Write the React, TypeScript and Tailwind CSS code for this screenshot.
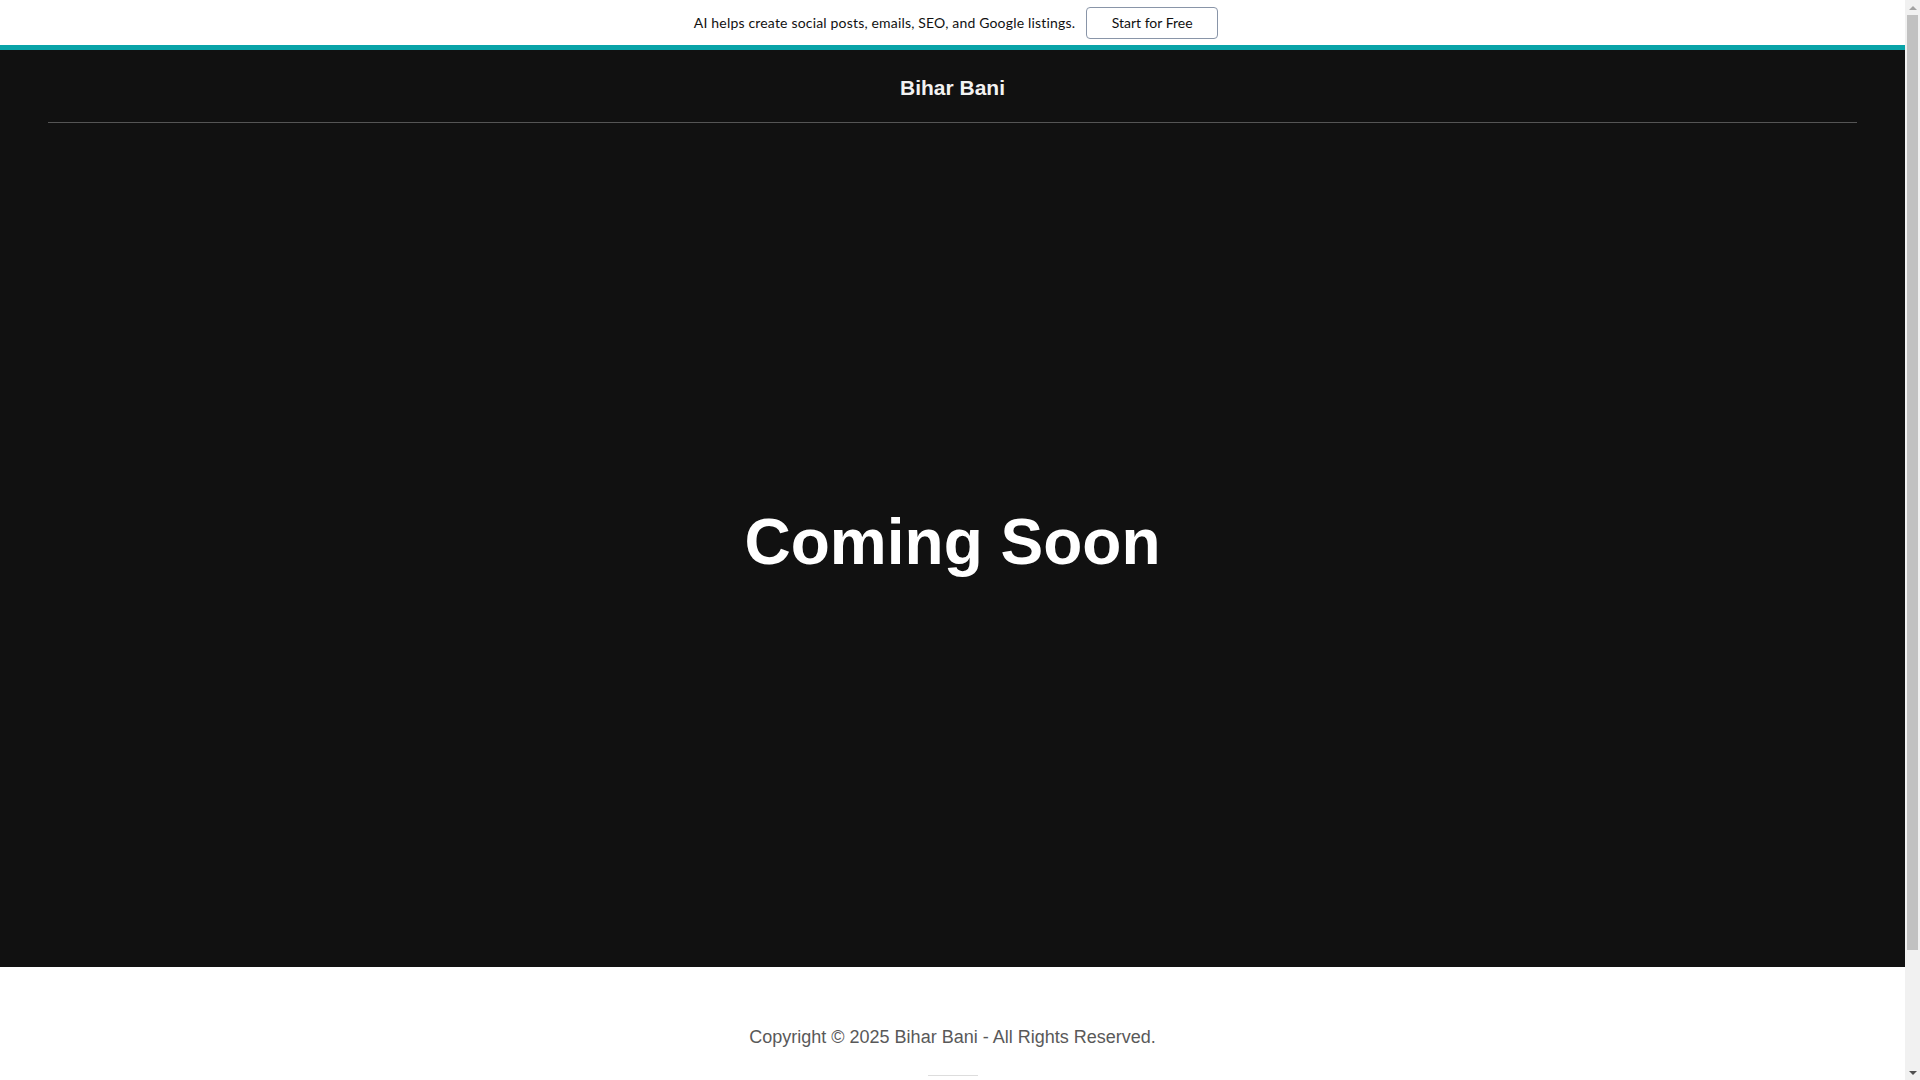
import React from "react";

function FakeScrollbar() {
  return (
    <div className="w-[15px] h-screen shrink-0 bg-[#f1f1f1] flex flex-col">
      <div className="h-[15px] flex items-center justify-center">
        <div className="w-0 h-0 border-l-[4px] border-r-[4px] border-b-[4px] border-l-transparent border-r-transparent border-b-[#a3a3a3]" />
      </div>
      <div className="mx-[2px] h-[935px] bg-[#c1c1c1]" />
      <div className="flex-1" />
      <div className="h-[15px] flex items-center justify-center">
        <div className="w-0 h-0 border-l-[4px] border-r-[4px] border-t-[4px] border-l-transparent border-r-transparent border-t-[#505050]" />
      </div>
    </div>
  );
}

export default function App() {
  return (
    <div className="h-screen w-full flex overflow-hidden bg-white" style={{ fontFamily: '"Liberation Sans", Arial, sans-serif' }}>
      <div className="flex-1 h-screen overflow-hidden">
        {/* Top promo banner */}
        <div className="h-[45px] bg-white flex items-center justify-center gap-[11px] pl-[7px]" style={{ fontFamily: 'Lato, "Liberation Sans", sans-serif' }}>
          <span className="text-[14px] text-[#111111] tracking-[0.18px]">AI helps create social posts, emails, SEO, and Google listings.</span>
          <button className="w-[132px] h-[32px] rounded-[4px] border border-[#8995a8] bg-white text-[14px] text-[#111111]">
            Start for Free
          </button>
        </div>
        <div className="h-[5px] bg-[#09a3a8]" />

        {/* Dark hero */}
        <div className="h-[917px] bg-[#111111] flex flex-col">
          <div className="mx-[48px] h-[73px] border-b border-[#555555] flex items-center justify-center">
            <span className="text-[21px] font-bold text-[#f2f2f2] leading-none pt-[2px]">Bihar Bani</span>
          </div>
          <div className="flex-1 flex items-center justify-center pb-[6px]">
            <h1 className="text-[64px] font-bold text-white leading-none">Coming Soon</h1>
          </div>
        </div>

        {/* Footer */}
        <div className="bg-white flex flex-col items-center pt-[57px] pb-[140px]">
          <p className="text-[18px] text-[#595959] leading-[27px]">Copyright © 2025 Bihar Bani - All Rights Reserved.</p>
          <div className="mt-[24px] w-[50px] border-t border-[#dddddd] h-[40px]" />
        </div>
      </div>
      <FakeScrollbar />
    </div>
  );
}
